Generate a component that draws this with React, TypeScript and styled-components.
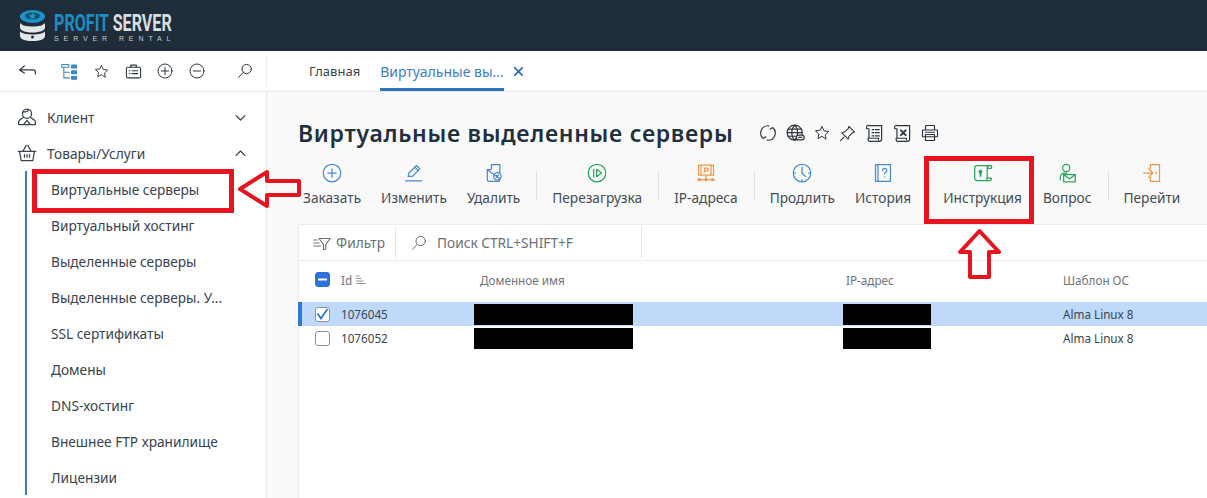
import React from "react";
import styled, { createGlobalStyle } from "styled-components";

const GlobalStyle = createGlobalStyle`
  html, body {
    margin: 0;
    padding: 0;
    background: #fff;
    overflow: hidden;
  }
  body {
    font-family: "Noto Sans", "Open Sans", sans-serif;
    color: #3a4450;
  }
  * { box-sizing: border-box; }
`;

const Page = styled.div`
  position: relative;
  width: 1207px;
  height: 498px;
  overflow: hidden;
  display: flex;
  flex-direction: column;
`;

const Header = styled.header`
  height: 51px;
  flex: none;
  background: #1f2c39;
  display: flex;
  align-items: center;
  padding-left: 20px;
  gap: 9px;
`;

const LogoText = styled.div`
  display: flex;
  flex-direction: column;
  width: 120px;
  padding-top: 5px;
`;

const LogoTitle = styled.div`
  font-family: "Roboto", sans-serif;
  font-weight: 700;
  font-size: 23px;
  line-height: 21px;
  white-space: nowrap;
  color: #d9dde0;
  transform: scaleX(0.7);
  transform-origin: left center;
  & span { color: #1a8fc4; }
`;

const LogoSub = styled.div`
  font-family: "Liberation Sans", sans-serif;
  font-size: 7px;
  line-height: 9px;
  letter-spacing: 4.9px;
  white-space: nowrap;
  color: #c8cdd2;
`;

const SubBar = styled.div`
  height: 41px;
  flex: none;
  display: flex;
  background: #fff;
  border-bottom: 1px solid #e9e9e9;
`;

const QuickTools = styled.div`
  width: 267px;
  flex: none;
  display: flex;
  align-items: center;
  padding-left: 18px;
  border-right: 1px solid #ececec;
  height: 30px;
  margin-top: 5px;
`;

const QuickIcon = styled.span<{ $w: number }>`
  width: ${(p) => p.$w}px;
  flex: none;
  display: flex;
  color: #2d3640;
`;

const Tabs = styled.nav`
  display: flex;
  padding-left: 42px;
  gap: 20px;
`;

const Tab = styled.div<{ $active?: boolean }>`
  position: relative;
  height: 40px;
  display: flex;
  align-items: center;
  font-size: ${(p) => (p.$active ? 14 : 13)}px;
  color: ${(p) => (p.$active ? "#3f7fc4" : "#3a4450")};
  border-bottom: 3px solid ${(p) => (p.$active ? "#2f72bd" : "transparent")};
  padding-top: 3px;
`;

const TabClose = styled.span`
  display: flex;
  align-items: center;
  margin-left: 9px;
  height: 40px;
`;

const Body = styled.div`
  flex: 1;
  display: flex;
  min-height: 0;
`;

const Sidebar = styled.aside`
  width: 267px;
  flex: none;
  background: #fff;
  border-right: 1px solid #e9e9e9;
  padding-top: 7px;
`;

const GroupRow = styled.div`
  height: 36px;
  display: flex;
  align-items: center;
  padding: 0 18px 0 17px;
  gap: 10px;
  font-size: 13.7px;
  color: #3a4450;
  & > svg:first-child { flex: none; }
  & > span { flex: 1; }
`;

const SubList = styled.div`
  margin-left: 25px;
  border-left: 2px solid #3d7fb5;
  padding-left: 24px;
  margin-top: 5px;
`;

const SubItem = styled.div`
  height: 36px;
  display: flex;
  align-items: center;
  font-size: 13.7px;
  color: #3a4450;
  white-space: nowrap;
  &:first-child { margin-top: -5px; }
`;

const Main = styled.main`
  flex: 1;
  background: #f9f9f9;
  padding: 28px 0 0 31px;
  min-width: 0;
`;

const TitleRow = styled.div`
  display: flex;
  align-items: center;
  height: 26px;
  margin-bottom: 17px;
`;

const Title = styled.h1`
  margin: 0;
  font-size: 23px;
  font-weight: 600;
  letter-spacing: 0.7px;
  color: #22303e;
  white-space: nowrap;
`;

const TitleIcons = styled.div`
  display: flex;
  align-items: center;
  gap: 9px;
  margin-left: 26px;
  color: #2d3640;
`;

const Toolbar = styled.div`
  display: flex;
  align-items: flex-start;
  height: 61px;
  margin-left: 5px;
  white-space: nowrap;
`;

const ToolButton = styled.div<{ $before?: number }>`
  display: flex;
  flex-direction: column;
  align-items: center;
  margin-left: ${(p) => p.$before ?? 20}px;
  font-size: 13.7px;
  color: #444c56;
  &:first-child { margin-left: 0; }
  & svg { display: block; margin: 0 0 5px; }
`;

const ToolSep = styled.div`
  width: 1px;
  height: 30px;
  background: #dfe0e1;
  margin: 8px 0 0 16px;
  & + div { margin-left: 15px; }
`;

const Panel = styled.section`
  height: 280px;
  background: #fff;
  border-top: 1px solid #ebebeb;
  box-shadow: inset 1px 0 0 #ebebeb;
`;

const FilterBar = styled.div`
  height: 36px;
  display: flex;
  align-items: stretch;
  font-size: 13.7px;
  color: #6a7079;
  border-bottom: 1px solid #ebebeb;
`;

const FilterCell = styled.div<{ $w: number; $pad: number; $gap: number }>`
  width: ${(p) => p.$w}px;
  display: flex;
  align-items: center;
  gap: ${(p) => p.$gap}px;
  padding-left: ${(p) => p.$pad}px;
  margin: 2px 0;
  border-right: 1px solid #e3e3e3;
  flex: none;
`;

const TableGrid = styled.div`
  display: grid;
  grid-template-columns: 43px 139px 366px 217px 1fr;
`;

const HeadCell = styled.div`
  height: 41px;
  padding-bottom: 4px;
  display: flex;
  align-items: center;
  gap: 3px;
  font-size: 11.7px;
  color: #6e747c;
  white-space: nowrap;
`;

const Row = styled.div<{ $selected?: boolean }>`
  grid-column: 1 / -1;
  display: grid;
  grid-template-columns: subgrid;
  height: 24px;
  align-items: center;
  font-size: 11.7px;
  color: #3a4450;
  background: ${(p) => (p.$selected ? "#bfd9fb" : "transparent")};
  box-shadow: ${(p) => (p.$selected ? "inset 4px 0 0 #2f7ad6" : "none")};
`;

const CheckCell = styled.div`
  display: flex;
  align-items: center;
  justify-content: center;
  padding-left: 5px;
`;

const Box = styled.span<{ $filled?: boolean }>`
  width: 15px;
  height: 15px;
  border-radius: 3px;
  display: flex;
  align-items: center;
  justify-content: center;
  background: ${(p) => (p.$filled ? "#2a73d9" : "#fff")};
  border: 1px solid ${(p) => (p.$filled ? "#2a73d9" : "#8d9298")};
`;

const Masked = styled.div<{ $w: number; $shift: number }>`
  width: ${(p) => p.$w}px;
  height: 21px;
  background: #000;
  margin-left: ${(p) => p.$shift}px;
`;

const Callout = styled.div<{ $x: number; $y: number; $w: number; $h: number }>`
  position: absolute;
  left: ${(p) => p.$x}px;
  top: ${(p) => p.$y}px;
  width: ${(p) => p.$w}px;
  height: ${(p) => p.$h}px;
  border: 5px solid #e8151f;
  pointer-events: none;
`;

const ArrowOverlay = styled.svg<{ $x: number; $y: number }>`
  position: absolute;
  left: ${(p) => p.$x}px;
  top: ${(p) => p.$y}px;
  overflow: visible;
`;

type IconProps = { children: React.ReactNode; size?: number; color?: string };

function Ico({ children, size = 18, color = "currentColor" }: IconProps) {
  return (
    <svg width={size} height={size} viewBox="0 0 24 24" fill="none" stroke={color} strokeWidth={1.5} strokeLinecap="round" strokeLinejoin="round">
      {children}
    </svg>
  );
}

function LogoMark() {
  return (
    <svg width="25" height="31" viewBox="0 0 25 31">
      <path d="M0 21.500c2 2 6 3 12.500 3s10.500-1 12.500-3V26c0 3-5 5-12.500 5S0 29 0 26z" fill="#e4e6e8" />
      <path d="M0 13c2 2.500 6 3.500 12.500 3.500S23 15.500 25 13v5c-1 3-6 4.500-12.500 4.500S1 21 0 18z" fill="#e4e6e8" />
      <ellipse cx="12.500" cy="6.500" rx="12.500" ry="6.500" fill="#1d93cb" />
      <ellipse cx="12.500" cy="6" rx="7.500" ry="3.400" fill="#14506f" />
      <path d="M12.500 2.500l1.100 2.200 2.500.3-1.800 1.700.4 2.500-2.200-1.200-2.200 1.200.4-2.500L8.900 5l2.500-.3z" fill="#1d93cb" />
      <circle cx="12.500" cy="27" r="1.500" fill="#1f2c39" />
    </svg>
  );
}

const BLUE = "#4a8bd0";
const GREEN = "#2aa65c";
const ORANGE = "#ec9a4a";

const tools = [
  { label: "Заказать", icon: <Ico size={20} color={BLUE}><circle cx="12" cy="12" r="10.500" /><path d="M12 7v10M7 12h10" /></Ico> },
  { label: "Изменить", icon: <Ico size={20} color={BLUE}><path d="M5 16l1-4L15 3l4 4-9 9z" /><path d="M13 5l4 4M2 21.500h19" /></Ico> },
  { label: "Удалить", icon: <Ico size={20} color={BLUE}><path d="M9 2h10v10M19 19v1a2 2 0 0 1-2 2H6a2 2 0 0 1-2-2V8z" /><path d="M9 2v5a1 1 0 0 1-1 1H4" /><circle cx="16" cy="16" r="4.500" /><path d="M14.500 14.500l3 3M17.500 14.500l-3 3" /></Ico> },
  { sep: true },
  { label: "Перезагрузка", icon: <Ico size={20} color={GREEN}><circle cx="12" cy="12" r="10.500" /><path d="M8 7.500v9M11.500 7.500v9l6-4.500z" /></Ico> },
  { sep: true },
  { label: "IP-адреса", icon: <Ico size={20} color={ORANGE}><path d="M3 2.500h18v12H3zM6 2.500v12M18 2.500v12" /><path d="M10 11V6h3a1.500 1.500 0 0 1 0 3.500h-3" /><path d="M2 20h20M12 15v5" /><circle cx="4" cy="20" r="1.200" /><circle cx="12" cy="20" r="1.200" /><circle cx="20" cy="20" r="1.200" /></Ico> },
  { sep: true },
  { label: "Продлить", icon: <Ico size={20} color={BLUE}><circle cx="12" cy="12" r="10.500" /><path d="M12 5v7l4 4M2 12h2M20 12h2M12 20v2" /></Ico> },
  { label: "История", icon: <Ico size={20} color={BLUE}><path d="M3 2h18v20H3zM6 2v20" /><path d="M11.500 9a2.500 2.500 0 1 1 3.500 2.300c-.8.400-1 1-1 1.700M14 16.500v.2" /></Ico> },
  { label: "Инструкция", before: 32, icon: <Ico size={20} color={GREEN}><path d="M20 3H5a3 3 0 0 0-3 3v12a3 3 0 0 0 3 3h10a2 2 0 0 0 2-2v-1h5v1a2 2 0 0 1-2 2h-5" /><path d="M17 18V6a3 3 0 0 1 3-3 2.200 2.200 0 0 1 2 3.500h-5" /><circle cx="9" cy="10.500" r="1.600" fill={GREEN} /><path d="M9 11v4.500" strokeWidth={2.200} /></Ico> },
  { label: "Вопрос", before: 21, icon: <Ico size={20} color={GREEN}><circle cx="11" cy="6" r="4.300" /><path d="M4 20v-3a5 5 0 0 1 5-5h3" /><path d="M8 14h14v8.500H8zM8 14l7 5 7-5" /></Ico> },
  { sep: true },
  { label: "Перейти", icon: <Ico size={20} color={ORANGE}><path d="M10 7V2h11v20H10v-5" /><path d="M2 12h10M8 7l5 5-5 5M17 11v2" /></Ico> },
] as { label?: string; icon?: React.ReactNode; sep?: boolean; before?: number }[];

const subItems = [
  "Виртуальные серверы",
  "Виртуальный хостинг",
  "Выделенные серверы",
  "Выделенные серверы. У...",
  "SSL сертификаты",
  "Домены",
  "DNS-хостинг",
  "Внешнее FTP хранилище",
  "Лицензии",
];

const rows = [
  { id: "1076045", selected: true },
  { id: "1076052", selected: false },
];

export default function App() {
  return (
    <Page>
      <GlobalStyle />
      <Header>
        <LogoMark />
        <LogoText>
          <LogoTitle>
            <span>PROFIT</span> SERVER
          </LogoTitle>
          <LogoSub>SERVER RENTAL</LogoSub>
        </LogoText>
      </Header>

      <SubBar>
        <QuickTools>
          <QuickIcon $w={43}>
            <Ico size={19}><path d="M2 10h17c2 0 3 1 3 3v2M2 10l6-5M2 10l6 4" /></Ico>
          </QuickIcon>
          <QuickIcon $w={33}>
            <Ico size={17} color="#3f86c9"><path d="M1 2h10v4H1zM4 6v15h8M4 13h8" /><rect x="15" y="3" width="7" height="4" fill="#3f86c9" /><rect x="15" y="11" width="7" height="4" fill="#3f86c9" /><rect x="15" y="19" width="7" height="4" fill="#3f86c9" /></Ico>
          </QuickIcon>
          <QuickIcon $w={31}>
            <Ico size={15}><path d="M12 2.500l3 6.300 6.800.9-5 4.800 1.300 6.800L12 17l-6.100 3.300 1.300-6.800-5-4.800 6.800-.9z" /></Ico>
          </QuickIcon>
          <QuickIcon $w={32}>
            <Ico size={17}><rect x="2" y="6" width="20" height="15" rx="2" /><path d="M8 6V3h8v3M6 11h1M10 11h8M6 15h1M10 15h8" /></Ico>
          </QuickIcon>
          <QuickIcon $w={32}>
            <Ico size={16}><circle cx="12" cy="12" r="10.500" /><path d="M6.500 12h11M12 6.500v11" /></Ico>
          </QuickIcon>
          <QuickIcon $w={48}>
            <Ico size={16}><circle cx="12" cy="12" r="10.500" /><path d="M6.500 12h11" /></Ico>
          </QuickIcon>
          <QuickIcon $w={18}>
            <Ico size={16}><circle cx="14.500" cy="9" r="7" /><path d="M9.500 14L2.500 21.500" /></Ico>
          </QuickIcon>
        </QuickTools>
        <Tabs>
          <Tab>Главная</Tab>
          <Tab $active>Виртуальные вы...</Tab>
        </Tabs>
        <TabClose>
          <Ico size={11} color="#2f72bd"><path d="M4 4l16 16M20 4L4 20" strokeWidth={4} /></Ico>
        </TabClose>
      </SubBar>

      <Body>
        <Sidebar>
          <GroupRow>
            <Ico size={20}><circle cx="12" cy="8" r="5.500" /><path d="M8 12c-1 2-6 3-6 5.500V21h20v-3.500c0-2.500-5-3.500-6-5.500M8 21l4-5 4 5M7 6c3 0 6-1 7-2" /></Ico>
            <span>Клиент</span>
            <Ico size={15}><path d="M5 9l7 7 7-7" strokeWidth={2} /></Ico>
          </GroupRow>
          <GroupRow>
            <Ico size={20}><path d="M1.500 10h21M3 10l2 11h14l2-11M7 10l4-7M17 10l-4-7M9 14v3M12 14v3M15 14v3" /></Ico>
            <span>Товары/Услуги</span>
            <Ico size={15}><path d="M5 15l7-7 7 7" strokeWidth={2} /></Ico>
          </GroupRow>
          <SubList>
            {subItems.map((item) => (
              <SubItem key={item}>{item}</SubItem>
            ))}
          </SubList>
        </Sidebar>

        <Main>
          <TitleRow>
            <Title>Виртуальные выделенные серверы</Title>
            <TitleIcons>
              <Ico size={18}><path d="M13 2.500A9.500 9.500 0 0 0 5.500 19M2.500 15.500l3 3.800 3.800-2.300M11 21.500A9.500 9.500 0 0 0 18.500 5M21.500 8.500l-3-3.800-3.800 2.300" /></Ico>
              <Ico size={19}><circle cx="11" cy="11" r="9.500" /><path d="M1.500 11h19M2.500 6.500h17M2.500 15.500h12M11 1.500c-5 5-5 14 0 19M11 1.500c5 5 5 14 0 19" /><rect x="13" y="14" width="10" height="6" rx="3" fill="#f9f9f9" /><path d="M16 17h4" /></Ico>
              <Ico size={16}><path d="M12 2.500l3 6.300 6.800.9-5 4.800 1.300 6.800L12 17l-6.100 3.300 1.300-6.800-5-4.800 6.800-.9z" /></Ico>
              <Ico size={17}><path d="M14 2l8 8-3 1-5 5-1 4-9-9 4-1 5-5zM7 17l-5 5" /></Ico>
              <Ico size={19}><path d="M5 2h16v17a3 3 0 0 1-3 3H6a2 2 0 0 1-2-2v-2h13v2M5 2a2 2 0 0 0-3 2v2h3M5 6v12M9 7h2M13 7h5M9 11h2M13 11h5M9 15h2M13 15h5" /></Ico>
              <Ico size={19}><path d="M5 2h16v17a3 3 0 0 1-3 3H6a2 2 0 0 1-2-2v-2h13v2M5 2a2 2 0 0 0-3 2v2h3M5 6v12" /><path d="M10 8l6 6M16 8l-6 6" strokeWidth={2.400} /></Ico>
              <Ico size={18}><path d="M6 8V2h12v6M2 8h20v9H2zM6 14h12v8H6zM6 11h12" /></Ico>
            </TitleIcons>
          </TitleRow>

          <Toolbar>
            {tools.map((tool, i) =>
              tool.sep ? (
                <ToolSep key={i} />
              ) : (
                <ToolButton key={i} $before={tool.before}>
                  {tool.icon}
                  {tool.label}
                </ToolButton>
              )
            )}
          </Toolbar>

          <Panel>
            <FilterBar>
              <FilterCell $w={98} $pad={15} $gap={5}>
                <Ico size={18} color="#6a7079"><path d="M8 6h15l-6 8v6l-3 1v-7zM1 8h5M1 12h7M1 16h9" /></Ico>
                Фильтр
              </FilterCell>
              <FilterCell $w={246} $pad={15} $gap={10}>
                <Ico size={16} color="#6a7079"><circle cx="14.500" cy="9" r="7" /><path d="M9.500 14L2.500 21.500" /></Ico>
                Поиск CTRL+SHIFT+F
              </FilterCell>
            </FilterBar>
            <TableGrid>
              <HeadCell as={CheckCell}>
                <Box $filled>
                  <svg width="9" height="3" viewBox="0 0 9 3"><rect width="9" height="2" y="0.5" fill="#fff" /></svg>
                </Box>
              </HeadCell>
              <HeadCell>
                Id
                <Ico size={12} color="#6e747c"><path d="M3 4h5M3 9h9M3 14h13M3 19h18" /></Ico>
              </HeadCell>
              <HeadCell>Доменное имя</HeadCell>
              <HeadCell>IP-адрес</HeadCell>
              <HeadCell>Шаблон ОС</HeadCell>
              {rows.map((row) => (
                <Row key={row.id} $selected={row.selected}>
                  <CheckCell>
                    <Box>
                      {row.selected && (
                        <svg width="13" height="12" viewBox="0 0 13 12" fill="none"><path d="M1.500 5.500L5 10.500 11.500 1" stroke="#2a73d9" strokeWidth="1.800" /></svg>
                      )}
                    </Box>
                  </CheckCell>
                  <div>{row.id}</div>
                  <Masked $w={159} $shift={-6} />
                  <Masked $w={88} $shift={-3} />
                  <div>Alma Linux 8</div>
                </Row>
              ))}
            </TableGrid>
          </Panel>
        </Main>
      </Body>

      <Callout $x={32} $y={169} $w={202} $h={44} />
      <Callout $x={924} $y={156} $w={110} $h={68} />
      <ArrowOverlay $x={237} $y={169} width="65" height="40" viewBox="0 0 65 40" fill="none">
        <path d="M3 20L30 3v9h32v14H30v11z" stroke="#e8151f" strokeWidth="4" strokeLinejoin="round" />
      </ArrowOverlay>
      <ArrowOverlay $x={958} $y={228} width="44" height="52" viewBox="0 0 44 52" fill="none">
        <path d="M21.500 3L41 24H31V49H12V24H2z" stroke="#e8151f" strokeWidth="4" strokeLinejoin="round" />
      </ArrowOverlay>
    </Page>
  );
}
